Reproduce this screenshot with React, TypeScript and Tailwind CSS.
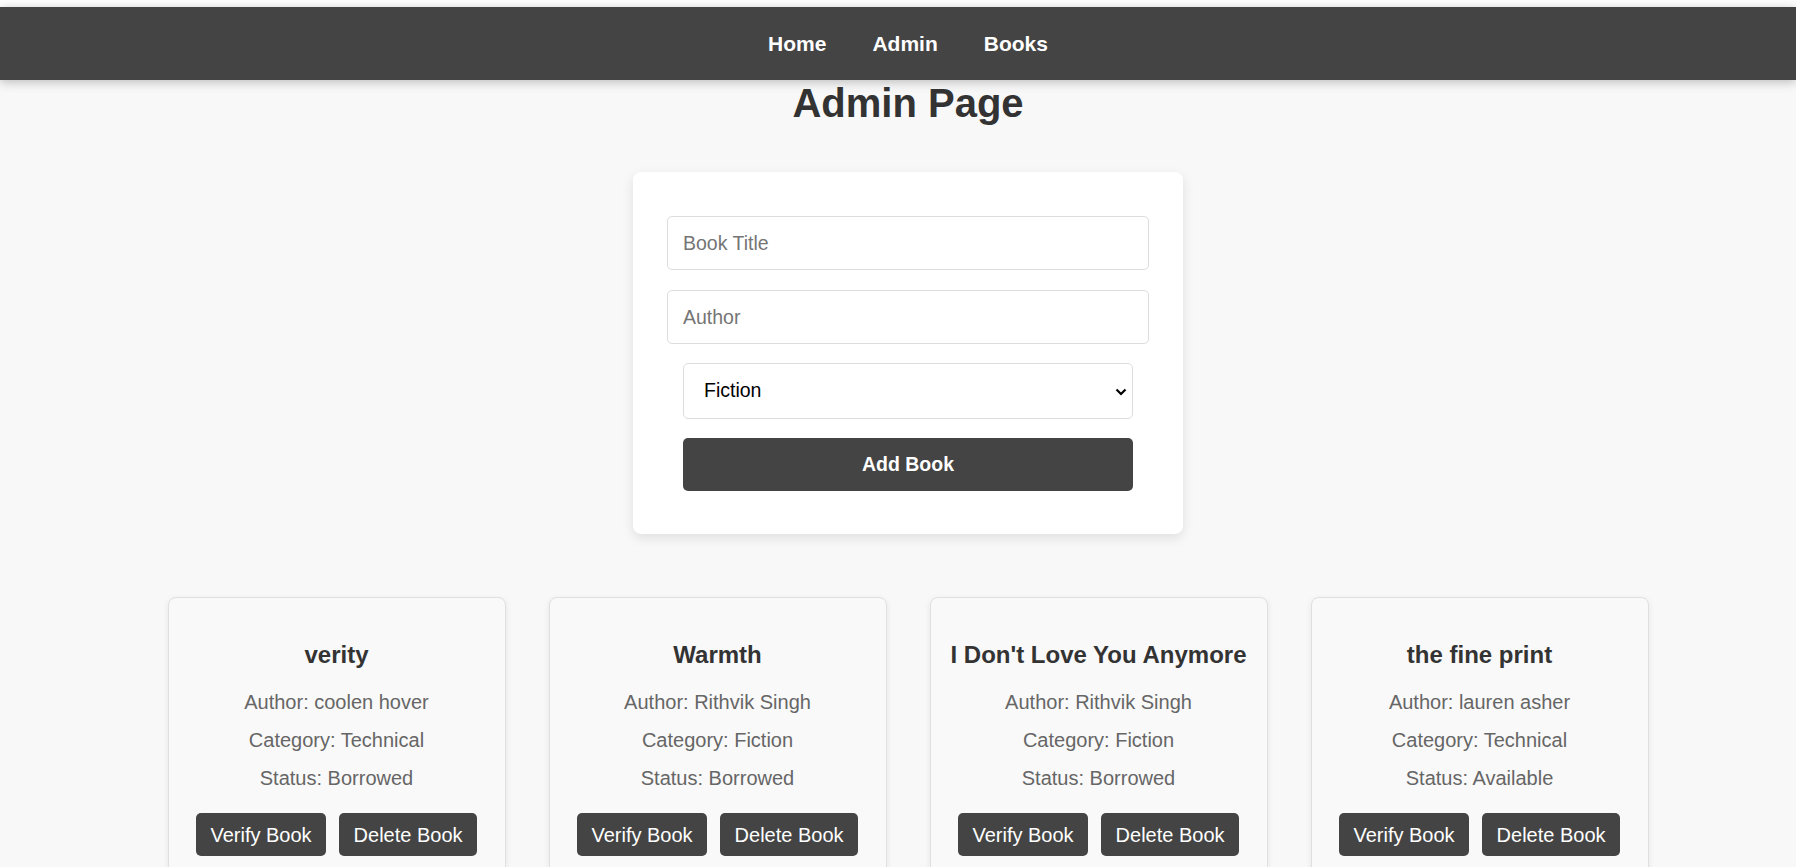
import { useState } from "react";

type Book = {
  title: string;
  author: string;
  category: string;
  status: string;
};

const books: Book[] = [
  { title: "verity", author: "coolen hover", category: "Technical", status: "Borrowed" },
  { title: "Warmth", author: "Rithvik Singh", category: "Fiction", status: "Borrowed" },
  { title: "I Don't Love You Anymore", author: "Rithvik Singh", category: "Fiction", status: "Borrowed" },
  { title: "the fine print", author: "lauren asher", category: "Technical", status: "Available" },
];

function Navbar() {
  return (
    <nav className="mt-[7px] h-[73px] bg-[#444] shadow-[0_2px_10px_rgba(0,0,0,0.25)] relative z-10">
      <ul className="h-full flex items-center justify-center gap-[46px] pl-[20px] text-[21px] font-bold text-white">
        <li><a href="#">Home</a></li>
        <li><a href="#">Admin</a></li>
        <li><a href="#">Books</a></li>
      </ul>
    </nav>
  );
}

function BookCard({ book }: { book: Book }) {
  return (
    <div className="w-[338px] shrink-0 bg-[#f9f9f9] border border-[#e0e0e0] rounded-[8px] shadow-[0_2px_6px_rgba(0,0,0,0.08)] px-[18px] pt-[43px] pb-[24px] flex flex-col items-center text-center">
      <h3 className="text-[24px] leading-[27px] font-bold text-[#333] whitespace-nowrap">{book.title}</h3>
      <p className="mt-[23px] text-[20px] leading-[23px] text-[#666]">Author: {book.author}</p>
      <p className="mt-[15px] text-[20px] leading-[23px] text-[#666]">Category: {book.category}</p>
      <p className="mt-[15px] text-[20px] leading-[23px] text-[#666]">Status: {book.status}</p>
      <div className="mt-[23px] flex gap-[13px]">
        <button className="h-[43px] px-[14.5px] rounded-[5px] bg-[#444] text-white text-[20px]">Verify Book</button>
        <button className="h-[43px] px-[14.5px] rounded-[5px] bg-[#444] text-white text-[20px]">Delete Book</button>
      </div>
    </div>
  );
}

export default function App() {
  const [title, setTitle] = useState("");
  const [author, setAuthor] = useState("");
  const [category, setCategory] = useState("Fiction");

  return (
    <div className="min-h-screen bg-[#f8f8f8] font-['Liberation_Sans',Arial,sans-serif]">
      <div className="bg-white">
        <Navbar />
      </div>

      <main className="pl-[20px] pb-[40px]">
        <h1 className="text-center text-[40px] leading-[46px] font-bold text-[#333]">Admin Page</h1>

        <form
          className="mt-[46px] w-[550px] mx-auto bg-white rounded-[8px] shadow-[0_4px_12px_rgba(0,0,0,0.1)] px-[34px] pt-[44px] pb-[43px] flex flex-col"
          onSubmit={(e) => e.preventDefault()}
        >
          <input
            value={title}
            onChange={(e) => setTitle(e.target.value)}
            placeholder="Book Title"
            className="h-[54px] w-full px-[15px] border border-[#ddd] rounded-[5px] text-[19.5px] text-black placeholder:text-[#757575] outline-none"
          />
          <input
            value={author}
            onChange={(e) => setAuthor(e.target.value)}
            placeholder="Author"
            className="mt-[20px] h-[54px] w-full px-[15px] border border-[#ddd] rounded-[5px] text-[19.5px] text-black placeholder:text-[#757575] outline-none"
          />
          <div className="relative mt-[19px] mx-[16px]">
            <select
              value={category}
              onChange={(e) => setCategory(e.target.value)}
              className="appearance-none h-[56px] w-full pl-[20px] pr-[30px] border border-[#ddd] rounded-[5px] bg-white text-[19.5px] text-black outline-none"
            >
              <option>Fiction</option>
              <option>Non-Fiction</option>
              <option>Technical</option>
            </select>
            <svg
              className="absolute right-[6px] top-[25px] pointer-events-none"
              width="12"
              height="8"
              viewBox="0 0 12 8"
              fill="none"
            >
              <path d="M1.5 1.5 L6 6 L10.5 1.5" stroke="#000" strokeWidth="2.2" />
            </svg>
          </div>
          <button
            type="submit"
            className="mt-[19px] mx-[16px] h-[53px] rounded-[5px] bg-[#444] text-white text-[19.5px] font-bold"
          >
            Add Book
          </button>
        </form>

        <div className="mt-[63px] flex justify-center items-start gap-[43px]">
          {books.map((b) => (
            <BookCard key={b.title} book={b} />
          ))}
        </div>
      </main>
    </div>
  );
}
